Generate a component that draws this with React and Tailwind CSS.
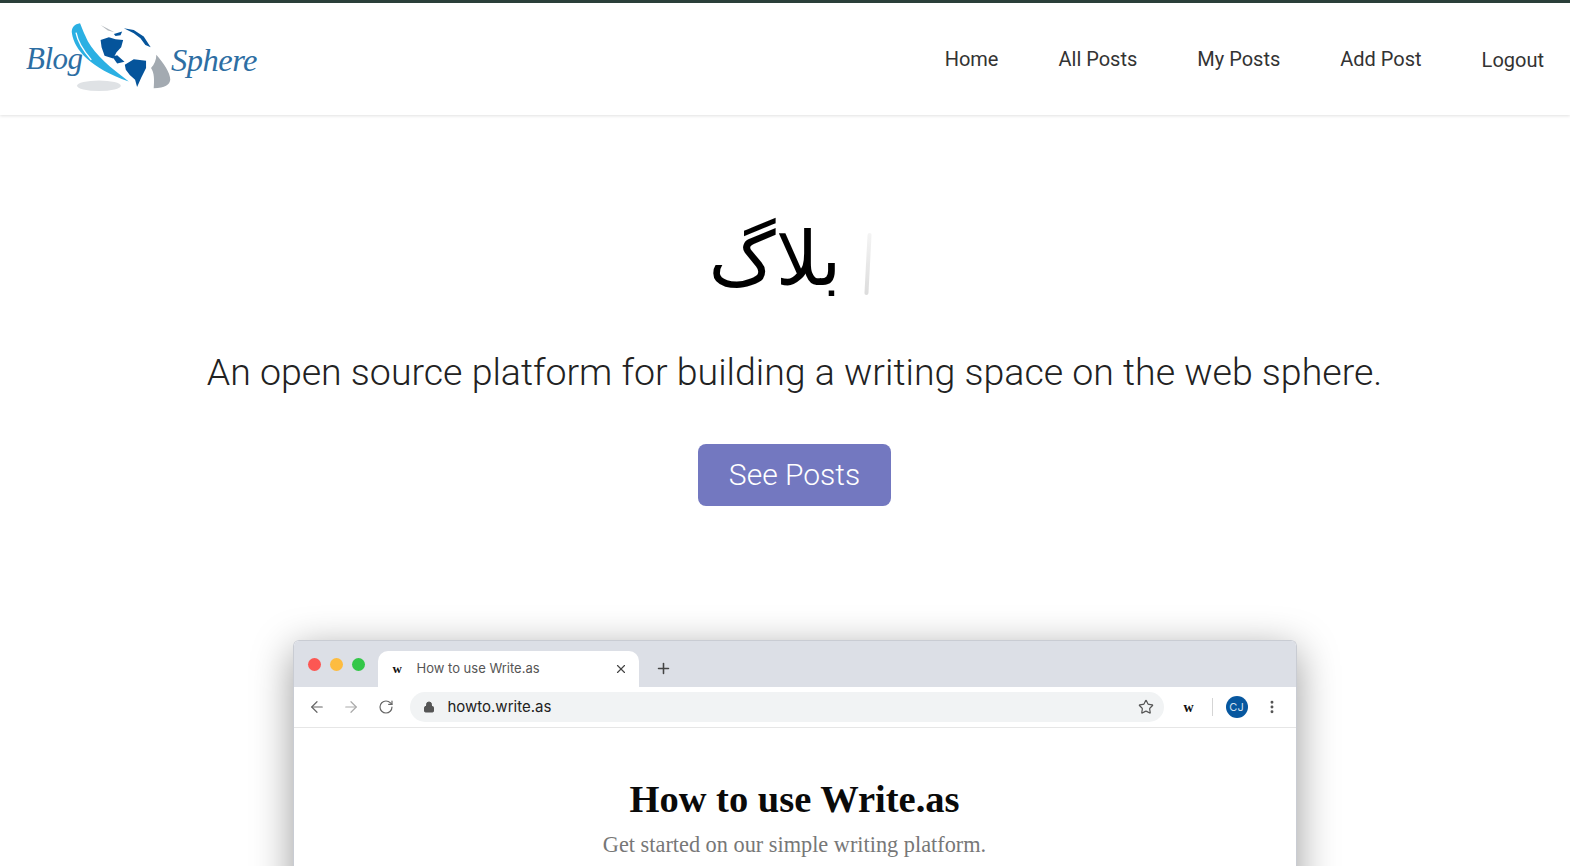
import { ArrowLeft, ArrowRight, RotateCw, Lock, Star, X, Plus, MoreVertical } from "lucide-react";

const links = ["Home", "All Posts", "My Posts", "Add Post"];

const Logo = () => (
  <div className="w-[232px] h-[72px] relative">
    <span className="absolute left-0 top-[20px] text-[31px] leading-none italic text-[#2d6ea3] font-['Liberation_Serif',serif] tracking-[-0.5px]">
      Blog
    </span>
    {/* globe mark, coordinates taken from a 3x crop */}
    <svg className="absolute left-[41px] top-[-3px]" width="107" height="73" viewBox="200 60 320 220">
      <ellipse cx="295" cy="258" rx="66" ry="16" fill="#dfe2e5" />
      <path d="M238 70 C222 72 210 84 214 102 C222 150 270 205 385 245 C330 205 285 165 262 125 C250 100 244 85 238 70 Z" fill="#2bb0e3" />
      <path d="M226 98 C232 130 250 155 272 180" stroke="#fff" strokeWidth="4" fill="none" />
      <path d="M300 120 L325 112 L345 118 L368 120 L362 142 L348 157 L338 176 L312 168 L303 142 Z" fill="#05549b" />
      <path d="M335 170 L350 166 L372 186 L350 191 Z" fill="#05549b" />
      <path d="M373 195 L400 178 L437 183 L437 205 L422 235 L410 262 L404 240 L388 226 L376 210 Z" fill="#05549b" />
      <path d="M370 85 L400 90 L430 110 L451 142 L435 135 L420 115 L400 100 Z" fill="#05549b" />
      <path d="M340 102 L365 95 L360 106 L345 108 Z" fill="#05549b" />
      <path d="M300 75 L342 97 L322 92 Z" fill="#b3b8bd" />
      <path d="M468 165 C490 190 510 220 510 240 C508 255 495 265 460 266 C462 240 462 220 452 205 C462 195 468 180 468 165 Z" fill="#a3aab1" />
    </svg>
    <span className="absolute left-[145px] top-[21px] text-[32.5px] leading-none italic text-[#2d6ea3] font-['Liberation_Serif',serif] tracking-[-0.5px]">
      Sphere
    </span>
  </div>
);

const BrowserMock = () => (
  <div className="w-[1004px] mx-auto rounded-t-[6px] border border-b-0 border-[#c9ccd3] shadow-[0_10px_40px_rgba(0,0,0,0.4)] overflow-hidden text-left">
    {/* tab strip */}
    <div className="h-[46px] bg-[#dcdfe6] flex items-end">
      <div className="flex gap-[9px] pl-[14px] pb-[16px]">
        <span className="w-[13px] h-[13px] rounded-full bg-[#fc5753]" />
        <span className="w-[13px] h-[13px] rounded-full bg-[#fdbc40]" />
        <span className="w-[13px] h-[13px] rounded-full bg-[#33c748]" />
      </div>
      <div className="ml-[13px] w-[261px] h-[36px] bg-white rounded-t-[10px] flex items-center pl-[15px] pr-[11px]">
        <span className="text-[13px] font-bold text-[#111] font-['Liberation_Serif',serif] w-[24px]">w</span>
        <span className="text-[13px] text-[#555] font-['Inter',sans-serif] flex-1">How to use Write.as</span>
        <X size={14} strokeWidth={2} className="text-[#444]" />
      </div>
      <Plus size={17} strokeWidth={2.2} className="ml-[16px] mb-[10px] text-[#444]" />
    </div>
    {/* toolbar */}
    <div className="h-[41px] bg-white border-b border-[#e6e6e6] flex items-center pl-[14px] pr-[16px]">
      <ArrowLeft size={18} strokeWidth={1.6} className="text-[#666]" />
      <ArrowRight size={18} strokeWidth={1.6} className="ml-[17px] text-[#aaa]" />
      <RotateCw size={16} strokeWidth={1.8} className="ml-[18px] text-[#666]" />
      <div className="ml-[16px] w-[755px] h-[30px] rounded-full bg-[#f1f3f4] flex items-center pl-[13px] pr-[10px]">
        <Lock size={12} fill="#555" strokeWidth={2} className="text-[#555]" />
        <span className="ml-[12px] text-[15px] text-[#222] font-['Inter',sans-serif] flex-1">howto.write.as</span>
        <Star size={16} strokeWidth={1.8} className="text-[#555]" />
      </div>
      <span className="ml-[19px] text-[14px] font-bold text-[#111] font-['Liberation_Serif',serif]">w</span>
      <span className="ml-[18px] w-px h-[18px] bg-[#d5d5d5]" />
      <span className="ml-[13px] w-[22px] h-[22px] rounded-full bg-[#07579f] text-[#cfe0f0] text-[11px] flex items-center justify-center font-['Inter',sans-serif]">
        CJ
      </span>
      <MoreVertical size={16} strokeWidth={2.4} className="ml-[16px] text-[#555]" />
    </div>
    {/* page */}
    <div className="bg-white h-[200px] pt-[49px] text-center font-['Liberation_Serif',serif]">
      <h2 className="text-[38.5px] leading-[44px] font-bold text-[#0a0a0a]">How to use Write.as</h2>
      <p className="mt-[12px] text-[22.3px] leading-[24px] text-[#777]">Get started on our simple writing platform.</p>
    </div>
  </div>
);

export default function App() {
  return (
    <div className="h-[866px] overflow-hidden bg-white font-['Roboto',sans-serif]">
      <nav className="h-[115px] border-t-[3px] border-[#2a3f3a] flex items-center justify-between pl-[26px] pr-[26px] shadow-[0_1px_3px_rgba(0,0,0,0.12)]">
        <Logo />
        <ul className="flex items-center gap-[60px] text-[20px] font-normal text-[#333] mb-[1px]">
          {links.map((link) => (
            <li key={link}>{link}</li>
          ))}
          <li className="mt-[3px]">Logout</li>
        </ul>
      </nav>

      <main className="text-center pl-[19px]">
        <div className="h-[104px] mt-[92px] mr-[10px] flex items-center justify-center gap-[25px]">
          <h1 className="text-[75px] leading-none text-black font-['Liberation_Serif','DejaVu_Sans',sans-serif]" dir="rtl">بلاگ</h1>
          <span className="w-[4px] h-[62px] bg-gradient-to-b from-[#f4f4f4] to-[#dcdcdc] rounded-full -skew-x-3 mt-[10px]" />
        </div>
        <p className="mt-[37px] text-[37.5px] leading-[48px] font-light text-[#222]">
          An open source platform for building a writing space on the web sphere.
        </p>
        <a className="inline-block mt-[48px] w-[193px] h-[62px] leading-[62px] rounded-[8px] bg-[#7378c0] text-white text-[30px] font-light">
          See Posts
        </a>
        <div className="mt-[134px]">
          <BrowserMock />
        </div>
      </main>
    </div>
  );
}
